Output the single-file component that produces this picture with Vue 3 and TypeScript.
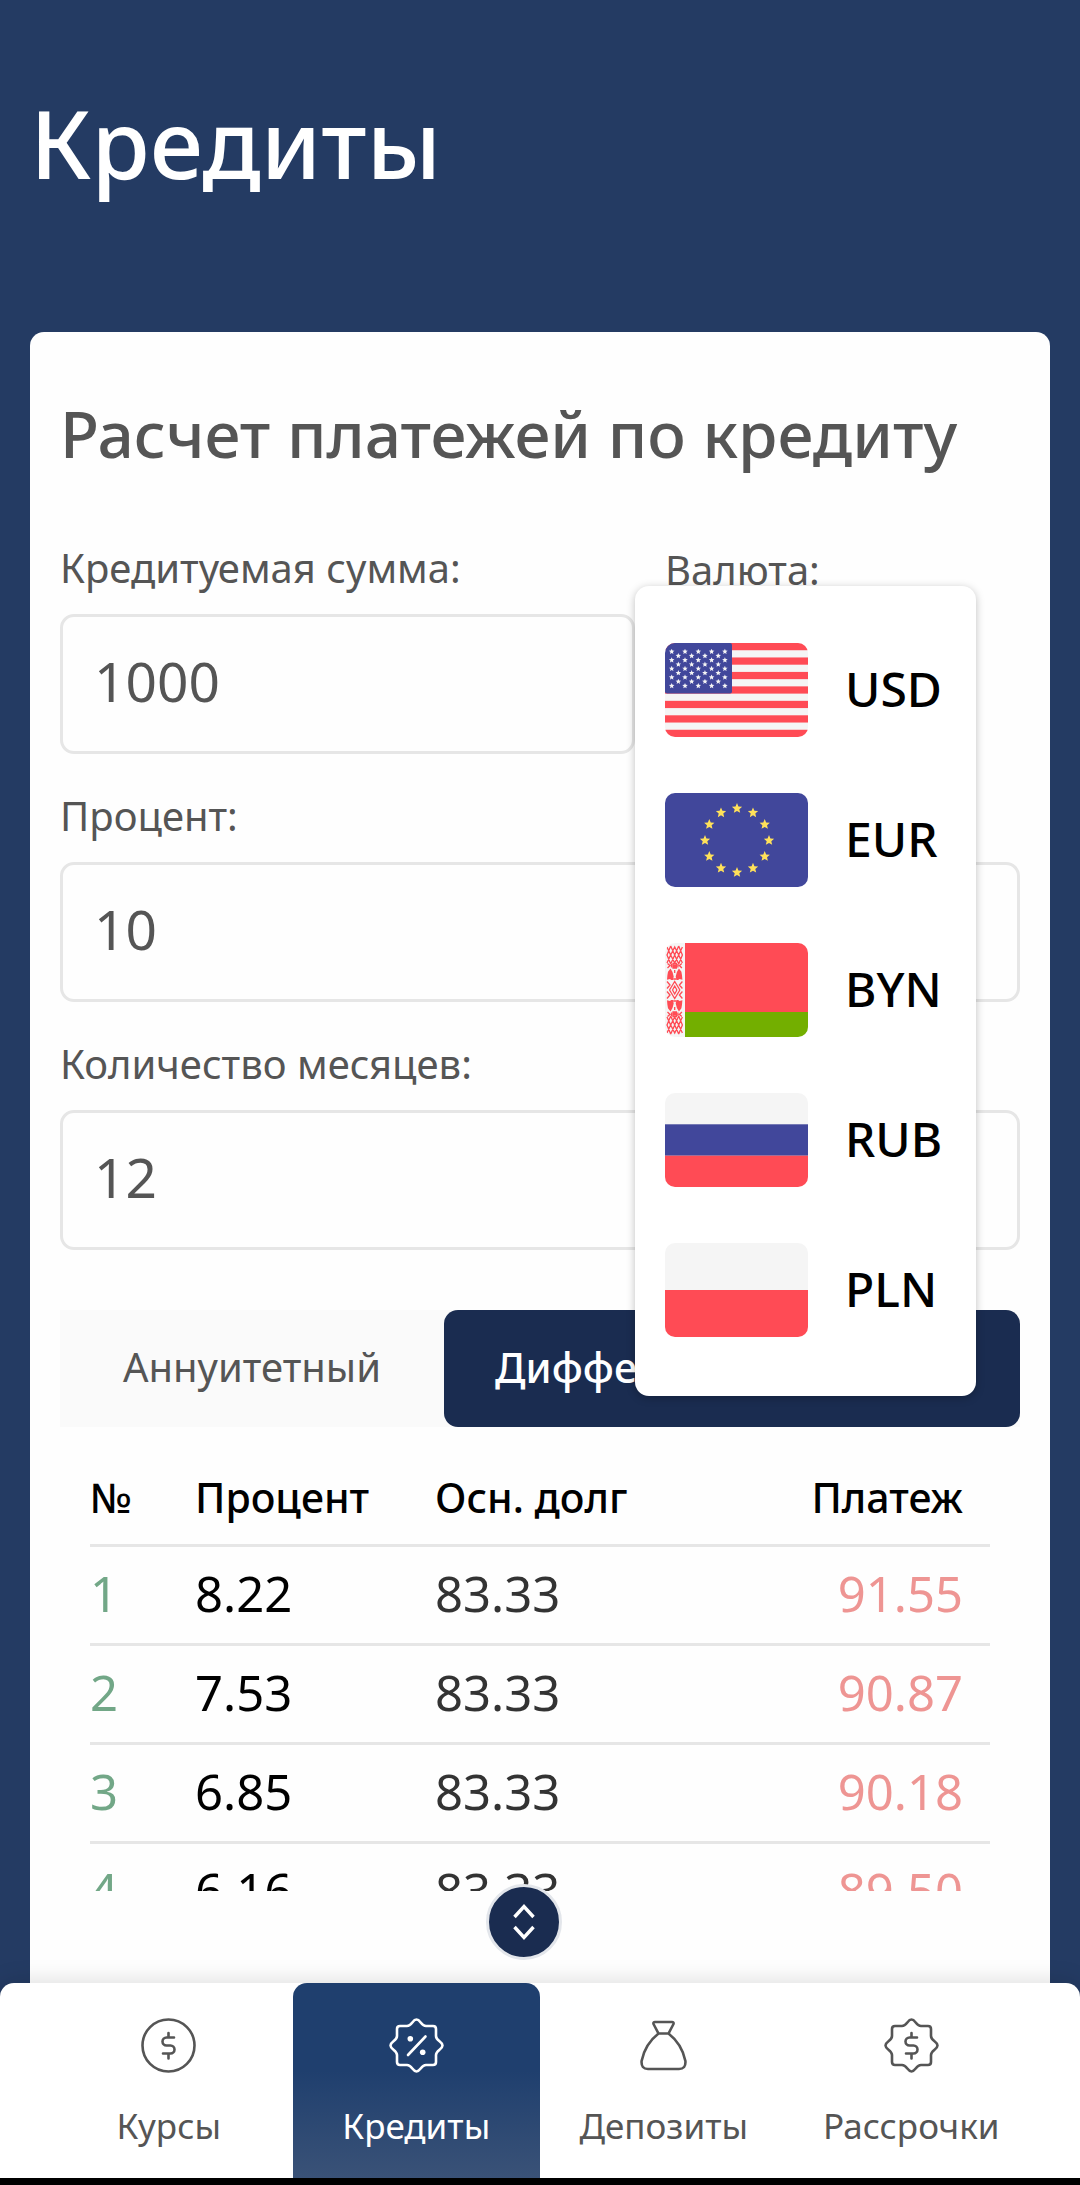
<script setup lang="ts">
import { ref } from 'vue'

interface Row {
  n: number
  percent: string
  debt: string
  payment: string
}

interface NavItem {
  id: string
  label: string
}

const amount = ref('1000')
const rate = ref('10')
const months = ref('12')
const currency = ref('USD')
const mode = ref('diff')
const section = ref('credits')

const currencies: string[] = ['USD', 'EUR', 'BYN', 'RUB', 'PLN']

const rows: Row[] = [
  { n: 1, percent: '8.22', debt: '83.33', payment: '91.55' },
  { n: 2, percent: '7.53', debt: '83.33', payment: '90.87' },
  { n: 3, percent: '6.85', debt: '83.33', payment: '90.18' },
  { n: 4, percent: '6.16', debt: '83.33', payment: '89.50' },
]

const nav: NavItem[] = [
  { id: 'rates', label: 'Курсы' },
  { id: 'credits', label: 'Кредиты' },
  { id: 'deposits', label: 'Депозиты' },
  { id: 'installments', label: 'Рассрочки' },
]

// Points of a five-pointed star centred on (cx, cy)
function star(cx: number, cy: number, r: number): string {
  return Array.from({ length: 10 }, (_, i) => {
    const radius = i % 2 === 0 ? r : r * 0.45
    const a = (Math.PI / 5) * i - Math.PI / 2
    return `${(cx + radius * Math.cos(a)).toFixed(2)},${(cy + radius * Math.sin(a)).toFixed(2)}`
  }).join(' ')
}

const usStars: string[] = []
for (let r = 0; r < 9; r++) {
  const odd = r % 2
  for (let c = 0; c < (odd ? 4 : 5); c++) {
    usStars.push(star(6.7 + odd * 6.65 + c * 13.3, 8.6 + r * 4.28, 2.9))
  }
}

const euStars: string[] = Array.from({ length: 12 }, (_, i) => {
  const a = (Math.PI / 6) * i
  return star(72 + 32 * Math.sin(a), 47.5 - 32 * Math.cos(a), 5.4)
})
</script>

<template>
  <div class="page">
    <header class="top">
      <h1>Кредиты</h1>
    </header>

    <main class="card">
      <h2>Расчет платежей по кредиту</h2>

      <form class="form" @submit.prevent>
        <div class="split">
          <div class="field">
            <label for="amount">Кредитуемая сумма:</label>
            <input id="amount" v-model="amount" type="text" inputmode="numeric" />
          </div>
          <div class="field currency">
            <span id="currency-label" class="caption">Валюта:</span>
            <div class="menu" role="listbox" aria-labelledby="currency-label">
              <button
                v-for="code in currencies"
                :key="code"
                type="button"
                class="option"
                role="option"
                :aria-selected="currency === code"
                @click="currency = code"
              >
                <svg class="flag" viewBox="0 0 143 94" aria-hidden="true">
                  <template v-if="code === 'USD'">
                    <rect width="143" height="94" fill="#f5f5f5" />
                    <rect v-for="i in 7" :key="i" y="0" width="143" height="7.23" fill="#ff4b55" :transform="`translate(0 ${(i - 1) * 14.46})`" />
                    <rect width="67" height="50.6" rx="2" fill="#41479b" />
                    <polygon v-for="(p, i) in usStars" :key="'s' + i" :points="p" fill="#f5f5f5" />
                  </template>
                  <template v-else-if="code === 'EUR'">
                    <rect width="143" height="94" fill="#41479b" />
                    <polygon v-for="(p, i) in euStars" :key="i" :points="p" fill="#ffe15a" />
                  </template>
                  <template v-else-if="code === 'BYN'">
                    <rect width="143" height="94" fill="#f5f5f5" />
                    <rect x="20" width="123" height="69" fill="#ff4b55" />
                    <rect x="20" y="69" width="123" height="25" fill="#73af00" />
                    <g v-for="t in ['', 'translate(0 94) scale(1 -1)']" :key="t" :transform="t" fill="none" stroke="#ff4b55" stroke-width="1.3">
                      <path d="M2 4l3.600 8L2 20M9.700 4l-4 8 4 8 4-8zM5.700 3l4 9-4 9M13.700 3l-4 9 4 9M17.400 4l-3.700 8 3.700 8M5.700 3L2 12l3.700 9M13.700 3l3.700 9-3.700 9" />
                      <path d="M8 20.500h3.400v1.700H8zM8 23.500h3.400v1.500H8zM2.500 20.500l2.500 2-2.500 2.500M16.900 20.500l-2.500 2 2.500 2.500M6.500 21v3.500M12.900 21v3.500" />
                      <path d="M5.500 25.500l2 3.500 1.200 4.500-.7 3.600H6.200L5 36l-3 .8.400-4.600.6-3.400zM13.900 25.500l-2 3.500-1.200 4.500.7 3.600h1.800l1.200-1.100 3 .8-.4-4.600-.6-3.400z" fill="#ff4b55" stroke="none" />
                      <path d="M9.700 27v3M8.200 36h3" />
                      <path d="M2 38.500l3 3.500-3 3.500M17.400 38.500l-3 3.500 3 3.500M4.500 47l5.200-8.600 5.200 8.600M7.500 47l2.200-4 2.200 4" />
                    </g>
                  </template>
                  <template v-else-if="code === 'RUB'">
                    <rect width="143" height="32" fill="#f5f5f5" />
                    <rect y="31.3" width="143" height="31.4" fill="#41479b" />
                    <rect y="62.7" width="143" height="31.3" fill="#ff4b55" />
                  </template>
                  <template v-else>
                    <rect width="143" height="47" fill="#f5f5f5" />
                    <rect y="47" width="143" height="47" fill="#ff4b55" />
                  </template>
                </svg>
                <span>{{ code }}</span>
              </button>
            </div>
          </div>
        </div>

        <div class="field">
          <label for="rate">Процент:</label>
          <input id="rate" v-model="rate" type="text" inputmode="decimal" />
        </div>
        <div class="field">
          <label for="months">Количество месяцев:</label>
          <input id="months" v-model="months" type="text" inputmode="numeric" />
        </div>
      </form>

      <div class="tabs">
        <button type="button" :class="{ on: mode === 'annuity' }" @click="mode = 'annuity'">Аннуитетный</button>
        <button type="button" :class="{ on: mode === 'diff' }" @click="mode = 'diff'">Дифференцированный</button>
      </div>

      <div class="schedule">
        <div class="clip">
          <table>
            <thead>
              <tr>
                <th class="n">№</th>
                <th class="percent">Процент</th>
                <th>Осн. долг</th>
                <th class="payment">Платеж</th>
              </tr>
            </thead>
            <tbody>
              <tr v-for="row in rows" :key="row.n">
                <td class="n">{{ row.n }}</td>
                <td class="percent">{{ row.percent }}</td>
                <td>{{ row.debt }}</td>
                <td class="payment">{{ row.payment }}</td>
              </tr>
            </tbody>
          </table>
        </div>
        <button type="button" class="expand" aria-label="Развернуть">
          <svg viewBox="0 0 70 70" fill="none" stroke="#fff" stroke-width="3.4">
            <path d="M25.500 30l9.500-10.500L44.500 30M25.500 40l9.500 10.500L44.500 40" />
          </svg>
        </button>
      </div>
    </main>

    <nav class="bar">
      <a
        v-for="item in nav"
        :key="item.id"
        :href="'#' + item.id"
        :class="{ active: section === item.id }"
        @click="section = item.id"
      >
        <svg viewBox="0 0 55 55" fill="none" stroke="currentColor" stroke-width="2.6" stroke-linecap="round" stroke-linejoin="round" aria-hidden="true">
          <circle v-if="item.id === 'rates'" cx="27.5" cy="27.5" r="26" />
          <path
            v-if="item.id === 'credits' || item.id === 'installments'"
            d="M27.500 1.500C31.500 1.500 32 8 37 8H44Q47 8 47 11V18C47 23 53.500 23.500 53.500 27.500S47 32 47 37V44Q47 47 44 47H37C32 47 31.500 53.500 27.500 53.500S23 47 18 47H11Q8 47 8 44V37C8 32 1.500 31.500 1.500 27.500S8 23 8 18V11Q8 8 11 8H18C23 8 23.500 1.500 27.500 1.500Z"
          />
          <path
            v-if="item.id === 'rates' || item.id === 'installments'"
            d="M33 19.500H25.500a4 4 0 0 0 0 8H29.500a4 4 0 0 1 0 8H22M27.500 15v4.500M27.500 35.500V40.500"
          />
          <template v-if="item.id === 'credits'">
            <path d="M19 37L36.500 18.500" />
            <circle cx="21.3" cy="20.700" r="2.800" fill="currentColor" stroke="none" />
            <circle cx="33.700" cy="34.300" r="2.800" fill="currentColor" stroke="none" />
          </template>
          <path
            v-if="item.id === 'deposits'"
            d="M22.500 15.500L17.500 6Q17 4 19 4H36Q38 4 37.500 6L32.500 15.500ZM22.500 15.500C13.500 22.500 8 31 5.600 43Q5 51 12 51H43Q50 51 49.400 43C47 31 41.500 22.500 32.500 15.500"
          />
        </svg>
        <span>{{ item.label }}</span>
      </a>
    </nav>
    <div class="system"></div>
  </div>
</template>

<style>
body {
  margin: 0;
  background: #243b63;
}
</style>

<style scoped>
.page,
.page * {
  box-sizing: border-box;
}

.page {
  display: flex;
  flex-direction: column;
  min-height: 100vh;
  background: #243b63;
  color: #555;
  font-family: "Noto Sans", "Open Sans", sans-serif;
}

button,
input {
  font-family: inherit;
}

.top {
  padding: 82px 30px 130px;
}

h1 {
  margin: 0;
  font-size: 95px;
  line-height: 120px;
  font-weight: 500;
  color: #fff;
}

.card {
  flex: 1;
  margin: 0 30px;
  padding: 62px 30px 92px;
  border-radius: 14px 14px 0 0;
  background: #fefefe;
}

h2 {
  margin: 0 0 64px;
  font-size: 64px;
  line-height: 80px;
  font-weight: 500;
  white-space: nowrap;
}

.form {
  display: flex;
  flex-direction: column;
  gap: 32px;
}

.split {
  display: flex;
  gap: 30px;
}

.split .field {
  flex: 575;
  min-width: 0;
}

.split .currency {
  flex: 355;
}

.field {
  display: flex;
  flex-direction: column;
  gap: 16px;
  position: relative;
}

label,
.caption {
  font-size: 40px;
  line-height: 60px;
  white-space: nowrap;
}

.caption {
  line-height: 64px;
}

input {
  width: 100%;
  height: 140px;
  padding: 0 31px 8px;
  border: 3px solid #e6e6e6;
  border-radius: 14px;
  background: #fefefe;
  color: #555;
  font-size: 55px;
}

.menu {
  position: absolute;
  z-index: 2;
  top: 48px;
  left: -30px;
  width: 341px;
  padding: 29px 30px 31px;
  border-radius: 14px;
  background: #fff;
  box-shadow: 0 2px 8px rgba(0, 0, 0, 0.25);
}

.option {
  display: flex;
  align-items: center;
  gap: 37px;
  width: 100%;
  height: 150px;
  padding: 0;
  border: 0;
  background: none;
  color: #000;
  font-size: 48px;
  font-weight: 500;
}

.option span {
  padding-bottom: 4px;
}

.flag {
  flex: none;
  width: 143px;
  height: 94px;
  border-radius: 10px;
}

.tabs {
  display: grid;
  grid-template-columns: 2fr 3fr;
  margin-top: 60px;
  background: #fafafa;
}

.tabs button {
  height: 117px;
  padding: 0 0 4px;
  border: 0;
  border-radius: 14px;
  background: none;
  color: #555;
  font-size: 40px;
}

.tabs .on {
  background: #1a2c50;
  color: #fff;
  font-size: 41px;
  font-weight: 500;
}

.schedule {
  position: relative;
  margin: 21px 30px 0;
}

.clip {
  max-height: 443px;
  overflow: hidden;
}

table {
  width: 100%;
  table-layout: fixed;
  border-collapse: separate;
  border-spacing: 0;
}

th,
td {
  height: 99px;
  padding: 0;
  border-bottom: 3px solid #e6e6e6;
  text-align: left;
  white-space: nowrap;
}

th {
  padding-top: 2px;
  color: #000;
  font-size: 41px;
  font-weight: 500;
}

td {
  padding-bottom: 5px;
  color: #333;
  font-size: 49px;
}

.n {
  width: 105px;
}

.percent {
  width: 240px;
}

.payment {
  padding-right: 27px;
  text-align: right;
}

td.n {
  color: #72a787;
}

td.percent {
  color: #000;
}

td.payment {
  color: #ee9593;
}

.expand {
  position: absolute;
  bottom: -69px;
  left: calc(50% - 54px);
  width: 76px;
  height: 76px;
  padding: 0;
  border: 3px solid #e3e6eb;
  border-radius: 50%;
  background: #1a2c50;
}

.expand svg {
  display: block;
  width: 70px;
  height: 70px;
}

.bar {
  position: relative;
  display: flex;
  padding: 0 45px;
  border-radius: 14px 14px 0 0;
  background: #fff;
  box-shadow: 0 0 24px rgba(0, 0, 0, 0.15);
}

.bar a {
  flex: 1 1 0;
  display: flex;
  flex-direction: column;
  align-items: center;
  gap: 29px;
  height: 195px;
  padding-top: 35px;
  border-radius: 14px 14px 0 0;
  color: #555;
  font-size: 35px;
  line-height: 48px;
  text-decoration: none;
}

.bar a.active {
  background: linear-gradient(#1f3f6e 45%, #3a5277);
  color: #fff;
}

.bar svg {
  width: 55px;
  height: 55px;
}

.system {
  position: relative;
  height: 7px;
  background: #000;
}
</style>
